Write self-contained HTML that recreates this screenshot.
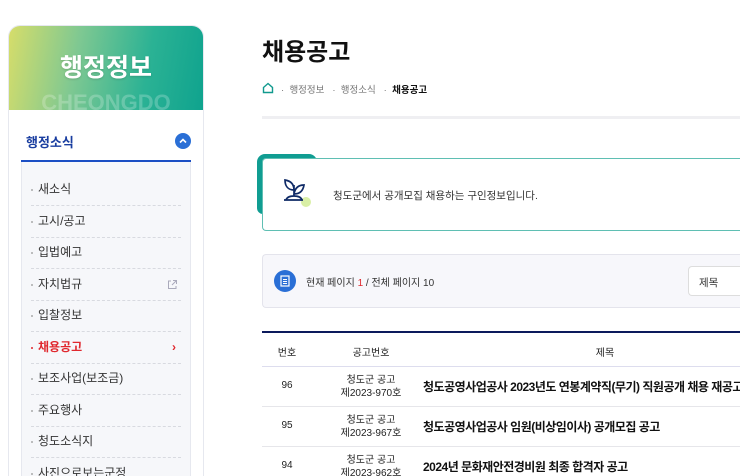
<!DOCTYPE html>
<html><head><meta charset="utf-8"><style>
*{margin:0;padding:0;box-sizing:border-box}
html,body{width:740px;height:476px;overflow:hidden}
body{background:#fff;font-family:"Liberation Sans","Noto Sans CJK KR",sans-serif;color:#222}
#w{position:relative;width:740px;height:476px;overflow:hidden}
.abs{position:absolute}
.side{left:8px;top:25px;width:196px;height:460px;border:1px solid #e6e8ef;border-bottom:none;border-radius:12px 12px 0 0;background:#fff;overflow:hidden}
.hd{left:0;top:0;width:194px;height:84px;background:linear-gradient(100deg,#d6dd6a 0%,#7ec892 35%,#2bb294 70%,#0fa38e 100%)}
.hd .t{position:absolute;left:0;width:194px;top:22px;text-align:center;color:#fff;font-size:25px;font-weight:bold;text-shadow:0 1px 2px rgba(0,0,0,.15)}
.hd .w{position:absolute;left:0;width:194px;top:64px;text-align:center;color:rgba(255,255,255,.22);font-size:22px;font-weight:bold}
.mt{left:26px;top:132px;font-size:13px;font-weight:bold;color:#1a3ea0}
.up{left:175px;top:133px;width:16px;height:16px;border-radius:50%;background:#2a6fd6}
.ul{left:21px;top:160px;width:170px;height:2px;background:#1b4fc4}
.sub{left:21px;top:162px;width:170px;height:320px;background:#f6f7fa;border:1px solid #e6e8ef;border-top:none;border-bottom:none}
.it{left:31px;width:150px;height:31.5px;border-bottom:1px dashed #d8dae0;font-size:12px;color:#333;padding-left:7px;line-height:31px}
.it:before{content:"";position:absolute;left:0;top:15px;width:2px;height:2px;background:#aaa;border-radius:50%}
.it.on{color:#e0282e;font-weight:bold}
.it.on:before{background:#e0282e}
.tt{left:423px;font-size:12px;font-weight:bold;color:#111;white-space:nowrap;letter-spacing:-0.5px}
</style></head><body><div id="w">
<div class="abs side">
 <div class="abs hd"><div class="t">행정정보</div><div class="w">CHEONGDO</div></div>
</div>
<div class="abs mt">행정소식</div>
<div class="abs up"><svg width="16" height="16"><path d="M5 9.5L8 6.5L11 9.5" stroke="#fff" stroke-width="1.6" fill="none"/></svg></div>
<div class="abs sub"></div>
<div class="abs ul"></div>
<div class="abs it" style="top:174px">새소식</div>
<div class="abs it" style="top:206px">고시/공고</div>
<div class="abs it" style="top:237px">입법예고</div>
<div class="abs it" style="top:269px">자치법규<svg style="position:absolute;right:3px;top:10px" width="11" height="11"><path d="M6 1.5H9.5V5M9.5 1.5L5 6M4 2H1.5V9.5H9V7" stroke="#aab" stroke-width="1" fill="none"/></svg></div>
<div class="abs it" style="top:300px">입찰정보</div>
<div class="abs it on" style="top:332px">채용공고<span style="position:absolute;right:5px;top:0;font-weight:bold">›</span></div>
<div class="abs it" style="top:363px">보조사업(보조금)</div>
<div class="abs it" style="top:395px">주요행사</div>
<div class="abs it" style="top:426px">청도소식지</div>
<div class="abs it" style="top:458px;height:18px;border:none;overflow:hidden">사진으로보는군정</div>

<div class="abs" style="left:262px;top:32px;font-size:24px;font-weight:bold;color:#111">채용공고</div>
<svg class="abs" style="left:262px;top:82px" width="12" height="12"><path d="M1.5 5.5L6 1.5L10.5 5.5V10.5H1.5Z" stroke="#119a8e" stroke-width="1.4" fill="none"/></svg>
<div class="abs" style="left:281px;top:82px;font-size:9.5px;color:#777;white-space:nowrap">·&nbsp;&nbsp;행정정보&nbsp;&nbsp;&nbsp;·&nbsp;&nbsp;행정소식&nbsp;&nbsp;&nbsp;·&nbsp;&nbsp;<b style="color:#111">채용공고</b></div>
<div class="abs" style="left:262px;top:116px;width:478px;height:3px;background:#efeff2"></div>

<div class="abs" style="left:257px;top:154px;width:60px;height:60px;background:#109d92;border-radius:8px 8px 0 6px"></div>
<div class="abs" style="left:262px;top:158px;width:478px;height:73px;background:#fff;border:1px solid #5fbfb3;border-right:none;border-radius:4px 0 0 4px"></div>
<svg class="abs" style="left:281px;top:176px" width="34" height="34"><circle cx="25" cy="26" r="5" fill="#d9efa6"/><path d="M13 20V9M13 14C13 8 10 5 4 4C4 10 7 14 13 14ZM13 18C14 12 17 9 23 9C22 15 19 18 13 18ZM3 24H22M5 24C6 21 9 20 13 20C17 20 20 21 21 24" stroke="#0f2a66" stroke-width="1.7" fill="none"/></svg>
<div class="abs" style="left:333px;top:188px;font-size:10.5px;color:#333">청도군에서 공개모집 채용하는 구인정보입니다.</div>

<div class="abs" style="left:262px;top:254px;width:478px;height:54px;background:#f7f7fb;border:1px solid #e4e4ec;border-right:none;border-radius:4px 0 0 4px"></div>
<div class="abs" style="left:274px;top:270px;width:22px;height:22px;border-radius:50%;background:#2a6fd6"></div>
<svg class="abs" style="left:279px;top:275px" width="12" height="12"><rect x="2" y="1" width="8" height="10" stroke="#fff" stroke-width="1.2" fill="none"/><path d="M4 4.5H8M4 6.5H8M4 8.5H8" stroke="#fff" stroke-width="1"/></svg>
<div class="abs" style="left:306px;top:274px;font-size:10px;color:#333">현재 페이지 <span style="color:#e0282e">1</span> / 전체 페이지 10</div>
<div class="abs" style="left:688px;top:266px;width:52px;height:30px;background:#fff;border:1px solid #ddd;border-right:none;border-radius:4px 0 0 4px;font-size:10.5px;padding:8px 10px;color:#333">제목</div>

<div class="abs" style="left:262px;top:331px;width:478px;height:2px;background:#0c1a5c"></div>
<div class="abs" style="left:262px;top:366px;width:478px;height:1px;background:#dde"></div>
<div class="abs" style="left:262px;top:406px;width:478px;height:1px;background:#e6e6ea"></div>
<div class="abs" style="left:262px;top:446px;width:478px;height:1px;background:#e6e6ea"></div>
<div class="abs" style="left:262px;top:344px;width:50px;text-align:center;font-size:10px">번호</div>
<div class="abs" style="left:326px;top:344px;width:90px;text-align:center;font-size:10px">공고번호</div>
<div class="abs" style="left:560px;top:344px;width:90px;text-align:center;font-size:10px">제목</div>
<div class="abs" style="left:262px;top:380px;width:50px;text-align:center;font-size:10px">96</div>
<div class="abs" style="left:326px;top:374px;width:90px;text-align:center;font-size:10px;line-height:13px">청도군 공고<br>제2023-970호</div>
<div class="abs tt" style="top:378px;width:317px;overflow:hidden">청도공영사업공사 2023년도 연봉계약직(무기) 직원공개 채용 재공고</div>
<div class="abs" style="left:262px;top:420px;width:50px;text-align:center;font-size:10px">95</div>
<div class="abs" style="left:326px;top:414px;width:90px;text-align:center;font-size:10px;line-height:13px">청도군 공고<br>제2023-967호</div>
<div class="abs tt" style="top:418px">청도공영사업공사 임원(비상임이사) 공개모집 공고</div>
<div class="abs" style="left:262px;top:460px;width:50px;text-align:center;font-size:10px">94</div>
<div class="abs" style="left:326px;top:454px;width:90px;height:22px;overflow:hidden;text-align:center;font-size:10px;line-height:13px">청도군 공고<br>제2023-962호</div>
<div class="abs tt" style="top:458px">2024년 문화재안전경비원 최종 합격자 공고</div>
</div></body></html>
